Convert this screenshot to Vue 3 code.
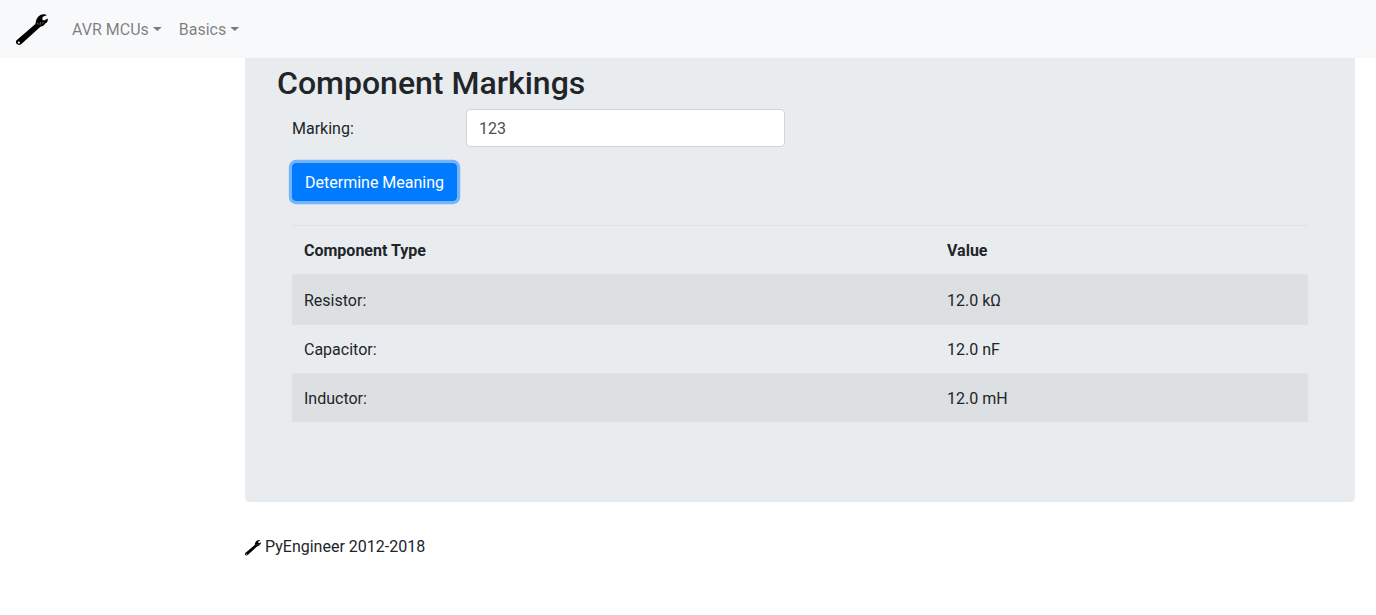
<script setup>
import { ref } from 'vue'

const menus = ['AVR MCUs', 'Basics']
const marking = ref('123')
const rows = [
  { type: 'Resistor:', value: '12.0 kΩ' },
  { type: 'Capacitor:', value: '12.0 nF' },
  { type: 'Inductor:', value: '12.0 mH' },
]
</script>

<template>
  <div class="page">
    <svg class="defs" width="0" height="0" aria-hidden="true">
      <symbol id="wrench" viewBox="0 0 32 32">
        <path
          fill-rule="evenodd"
          d="M.6 26.2 L19.4 10 C19.8 6 21.4 2.4 24.4 .9 C26.6 0 29.6 .1 30.8 1.3 L26.8 2.8 L26.2 5.4 L28.1 6.6 L31.7 4.6 C32.2 6.9 31 8.8 29.2 9.6 C28.4 10.4 28.2 11.8 26.8 12.1 C25.4 12.4 24.6 12.6 23.6 13.6 L5.4 30 C3.7 31.4 1.5 31.3.5 29.8 C-.3 28.7-.2 27.2.6 26.2 Z M2.9 27.5 A1.1 1.1 0 1 0 2.9 29.7 A1.1 1.1 0 1 0 2.9 27.5 Z"
        />
        <path d="M21.4 8.8l.8 1.8M24.4 8.2l-.3 2.6M27 8l-.4 1.6" fill="none" stroke="#a4a6a7" stroke-width=".7" />
      </symbol>
    </svg>
    <nav class="navbar">
      <a class="brand"><svg class="logo"><use href="#wrench" /></svg></a>
      <a v-for="menu in menus" :key="menu" class="nav-link">{{ menu }}</a>
    </nav>
    <main class="panel">
      <h2>Component Markings</h2>
      <div class="content">
        <div class="form-row">
          <label for="marking">Marking:</label>
          <input id="marking" v-model="marking" type="text" />
        </div>
        <button class="submit" type="button">Determine Meaning</button>
        <table>
          <thead>
            <tr><th class="type">Component Type</th><th>Value</th></tr>
          </thead>
          <tbody>
            <tr v-for="row in rows" :key="row.type">
              <td>{{ row.type }}</td>
              <td>{{ row.value }}</td>
            </tr>
          </tbody>
        </table>
      </div>
    </main>
    <footer><svg class="mark"><use href="#wrench" /></svg><span>PyEngineer 2012-2018</span></footer>
  </div>
</template>

<style>
body {
  margin: 0;
  background: #fff;
}
</style>

<style scoped>
.page,
.page * {
  box-sizing: border-box;
}
.page {
  height: 615px;
  overflow: hidden;
  color: #212529;
  font: 400 16px/24px Roboto, sans-serif;
}
.defs {
  display: block;
}
.navbar {
  display: flex;
  align-items: center;
  height: 58px;
  padding: 2px 16px 0;
  background: #f8f9fa;
}
.brand {
  display: flex;
  margin-right: 16px;
}
.logo {
  width: 32px;
  height: 32px;
}
.nav-link {
  padding: 0 8px;
  color: rgba(0, 0, 0, 0.5);
}
.nav-link::after {
  content: "";
  display: inline-block;
  width: 9px;
  height: 4px;
  margin: 0 1px 0 4px;
  vertical-align: 4px;
  background: currentColor;
  clip-path: polygon(0 0, 100% 0, 50% 100%);
}
.panel {
  width: 1110px;
  height: 444px;
  margin-left: 245px;
  padding: 6px 32px 0;
  background: #e9ecef;
  border-radius: 0 0 4.8px 4.8px;
}
h2 {
  height: 38px;
  margin: 0 0 7px;
  font-size: 32px;
  font-weight: 500;
  line-height: 38.4px;
}
.content {
  padding: 0 15px;
}
.form-row {
  display: flex;
  align-items: center;
  margin-bottom: 16px;
}
label {
  width: 174px;
  padding-top: 2px;
}
input {
  width: 319px;
  height: 38px;
  padding: 6px 12px;
  border: 1px solid #ced4da;
  border-radius: 4px;
  background: #fff;
  color: #495057;
  font: inherit;
}
.submit {
  display: block;
  height: 38px;
  padding: 7px 12px 5px;
  border: 1px solid #007bff;
  border-radius: 4px;
  background: #007bff;
  color: #fff;
  font: inherit;
  box-shadow: 0 0 0 3.2px rgba(0, 123, 255, 0.5);
}
table {
  width: 1016px;
  margin-top: 24px;
  border-spacing: 0;
  table-layout: fixed;
}
.type {
  width: 643px;
}
tr {
  height: 49px;
}
th,
td {
  padding: 13px 12px 11px;
  border-top: 1px solid #dee2e6;
  text-align: left;
}
th {
  font-weight: 700;
}
tbody tr:first-child {
  height: 50px;
}
tbody tr:nth-child(odd) {
  background: rgba(0, 0, 0, 0.05);
}
footer {
  display: flex;
  align-items: center;
  gap: 4px;
  margin: 33px 0 0 245px;
}
.mark {
  width: 16px;
  height: 16px;
  margin-top: 1px;
}
</style>
